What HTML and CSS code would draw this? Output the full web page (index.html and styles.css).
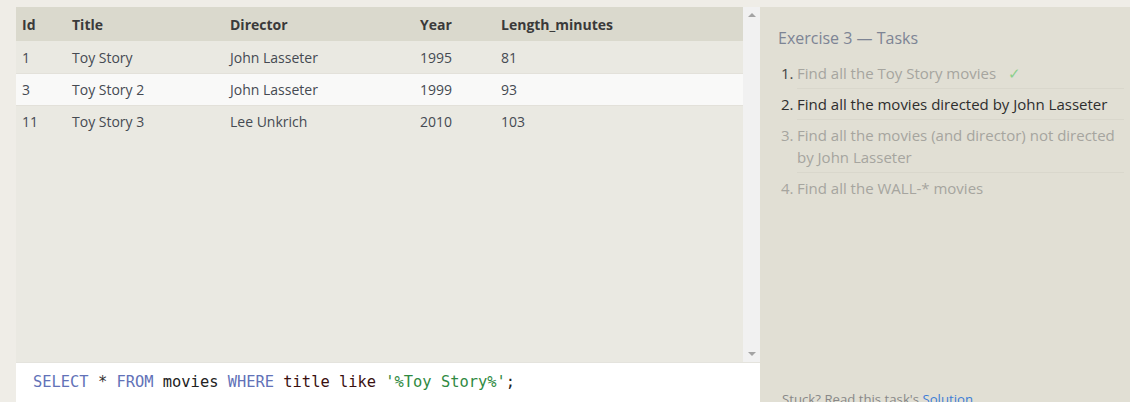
FILE: index.html
```html
<!DOCTYPE html>
<html>
<head>
<meta charset="utf-8">
<link rel="stylesheet" href="styles.css">
</head>
<body>
<div class="app">
  <div class="left">
    <div class="results">
      <div class="table-wrap">
        <table class="grid">
          <thead>
            <tr><th class="c-id">Id</th><th class="c-title">Title</th><th class="c-dir">Director</th><th class="c-year">Year</th><th>Length_minutes</th></tr>
          </thead>
          <tbody>
            <tr><td>1</td><td>Toy Story</td><td>John Lasseter</td><td>1995</td><td>81</td></tr>
            <tr class="hover"><td>3</td><td>Toy Story 2</td><td>John Lasseter</td><td>1999</td><td>93</td></tr>
            <tr><td>11</td><td>Toy Story 3</td><td>Lee Unkrich</td><td>2010</td><td>103</td></tr>
          </tbody>
        </table>
      </div>
      <div class="scrollbar">
        <span class="arrow up"></span>
        <span class="arrow down"></span>
      </div>
    </div>
    <div class="editor"><span class="kw">SELECT</span> <span class="op">*</span> <span class="kw">FROM</span> <span class="id">movies</span> <span class="kw">WHERE</span> <span class="id2">title like</span> <span class="str">'%Toy Story%'</span>;</div>
  </div>
  <div class="right">
    <h3 class="tasks-title">Exercise 3 — Tasks</h3>
    <ol class="tasks">
      <li class="done"><span class="num">1.</span><span class="txt">Find all the Toy Story movies <span class="check">✓</span></span></li>
      <li class="active"><span class="num">2.</span><span class="txt">Find all the movies directed by John Lasseter</span></li>
      <li class="todo"><span class="num">3.</span><span class="txt">Find all the movies (and director) not directed by John Lasseter</span></li>
      <li class="todo"><span class="num">4.</span><span class="txt">Find all the WALL-* movies</span></li>
    </ol>
    <p class="stuck">Stuck? Read this task's <a class="sol">Solution</a></p>
  </div>
</div>
</body>
</html>
```
FILE: styles.css
```css
html, body {
  margin: 0;
  padding: 0;
}
body {
  background: #efede7;
  font-family: "Open Sans", "Noto Sans", sans-serif;
  font-size: 14px;
  color: #444;
  overflow: hidden;
}
.app {
  display: flex;
  height: 402px;
  padding: 7px 0 0 16px;
  box-sizing: border-box;
}
.left {
  width: 744px;
  display: flex;
  flex-direction: column;
}
.results {
  display: flex;
  height: 355px;
}
.table-wrap {
  flex: 1;
  background: #eae9e2;
}
.grid {
  border-collapse: collapse;
  width: 100%;
}
.grid th {
  background: #dad9cd;
  text-align: left;
  font-weight: 700;
  color: #3a3a3a;
  height: 34px;
  padding: 0 0 0 6px;
  font-size: 14px;
}
.grid td {
  height: 31px;
  padding: 0 0 0 6px;
  border-top: 1px solid #e3e1da;
  color: #454a52;
}
.grid tbody tr:first-child td { border-top: none; height: 32px; }
.grid tr.hover td { background: #f9f9f8; }
.c-id { width: 44px; }
.c-title { width: 152px; }
.c-dir { width: 184px; }
.c-year { width: 75px; }
.scrollbar {
  width: 17px;
  background: #f1f1f1;
  display: flex;
  flex-direction: column;
  justify-content: space-between;
  align-items: center;
  padding: 6px 0 6px;
  box-sizing: border-box;
}
.arrow {
  width: 0;
  height: 0;
  border-left: 4px solid transparent;
  border-right: 4px solid transparent;
}
.arrow.up { border-bottom: 4px solid #a3a3a3; }
.arrow.down { border-top: 4px solid #a3a3a3; }
.editor {
  flex: 1;
  background: #fff;
  border-top: 1px solid #e4e3dd;
  font-family: "DejaVu Sans Mono", monospace;
  font-size: 15.4px;
  padding: 10px 0 0 17px;
  color: #222;
  white-space: pre;
}
.kw { color: #6272b8; }
.op { color: #333; }
.id { color: #222; }
.id2 { color: #3a1010; }
.str { color: #2f8a42; }
.right {
  flex: 1;
  background: #e1dfd4;
  padding: 0 6px 0 18px;
  position: relative;
}
.tasks-title {
  margin: 0;
  padding-top: 19px;
  font-weight: 400;
  font-size: 16px;
  line-height: 24px;
  color: #7d8494;
}
.tasks {
  list-style: none;
  margin: 8px 0 0;
  padding: 0 0 0 3px;
}
.tasks li {
  display: flex;
  font-size: 15px;
  line-height: 22px;
}
.num {
  width: 16px;
  padding-top: 4px;
  flex: none;
}
.txt {
  flex: 1;
  padding: 4px 0;
  border-bottom: 1px solid #d9d7cc;
}
.tasks li:last-child .txt { border-bottom: none; }
.done .num { color: #444; }
.done .txt { color: #a6a59f; }
.check { color: #8ccf8c; margin-left: 8px; }
.active .num, .active .txt { color: #2e2e2e; }
.todo .num, .todo .txt { color: #a6a59f; }
.stuck {
  position: absolute;
  left: 22px;
  top: 383px;
  margin: 0;
  font-size: 13.2px;
  color: #888;
}
.sol { color: #3d7dd6; }
```
